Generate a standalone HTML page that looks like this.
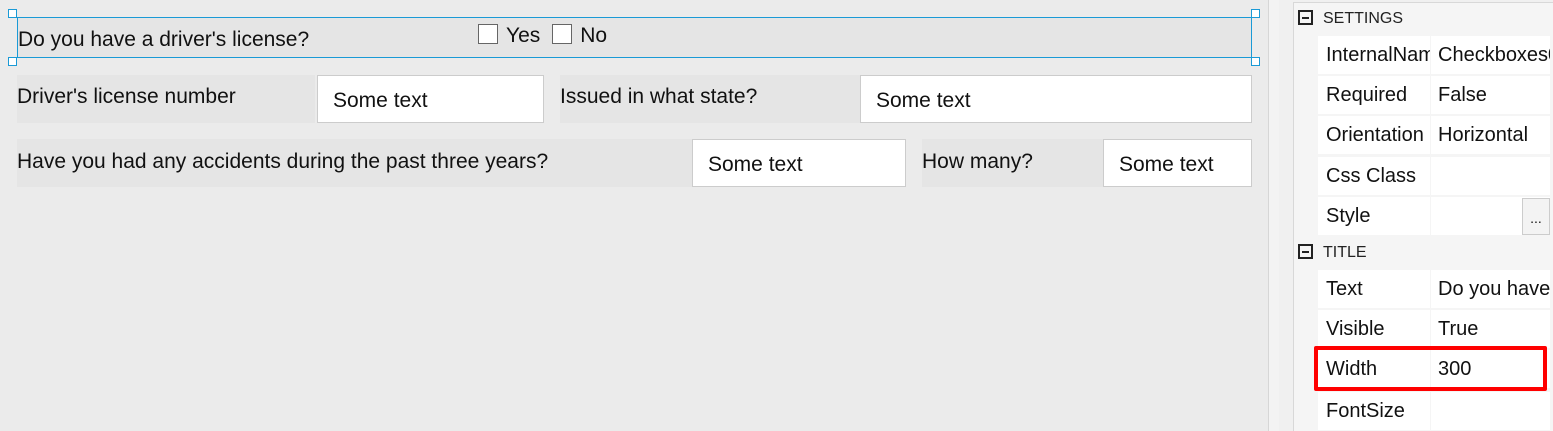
<!DOCTYPE html>
<html><head><style>
*{margin:0;padding:0;box-sizing:border-box}
body{width:1553px;height:431px;background:#ebebeb;font-family:"Liberation Sans","DejaVu Sans",sans-serif;color:#111;position:relative;overflow:hidden;font-size:21px}
.a{position:absolute}
.lb{position:absolute;background:#e5e5e5;white-space:nowrap;overflow:hidden}
.in{position:absolute;background:#fff;border:1px solid #ccc;white-space:nowrap;padding-left:15px;overflow:hidden}
.h{position:absolute;width:9px;height:9px;border:1px solid #1a9ad6;background:#fff}
.cb{display:inline-block;width:20px;height:20px;border:1px solid #666;background:#fff;vertical-align:-2px;margin-right:8px}
.pn{position:absolute;left:1318px;width:112px;height:38px;background:#fff;padding-left:8px;line-height:38px;font-size:20px;white-space:nowrap;overflow:hidden}
.pv{position:absolute;left:1431px;width:119px;height:38px;background:#fff;padding-left:7px;line-height:38px;font-size:20px;white-space:nowrap;overflow:hidden}
.sec{position:absolute;left:1298px;font-size:16px;color:#222}
.sec i{display:inline-block;width:15px;height:15px;border:2px solid #222;position:relative;vertical-align:-2px;margin-right:10px}
.sec i:after{content:"";position:absolute;left:2px;top:4.5px;width:7px;height:2px;background:#222}
</style></head><body>
<div class="lb" style="left:17px;top:17px;width:1235px;height:41px;border:1px solid #1a9ad6;line-height:44px;padding-left:0">Do you have a driver's license?</div>
<div class="a" style="left:478px;top:22px;line-height:28px;font-size:21px"><span class="cb"></span>Yes<span class="cb" style="margin-left:12px"></span>No</div>
<div class="h" style="left:8px;top:9px"></div>
<div class="h" style="left:8px;top:57px"></div>
<div class="h" style="left:1251px;top:9px"></div>
<div class="h" style="left:1251px;top:57px"></div>

<div class="lb" style="left:17px;top:75px;width:298px;height:48px;line-height:44px">Driver's license number</div>
<div class="in" style="left:317px;top:75px;width:227px;height:48px;line-height:50px">Some text</div>
<div class="lb" style="left:560px;top:75px;width:300px;height:48px;line-height:44px">Issued in what state?</div>
<div class="in" style="left:860px;top:75px;width:392px;height:48px;line-height:50px">Some text</div>

<div class="lb" style="left:17px;top:139px;width:675px;height:48px;line-height:46px">Have you had any accidents during the past three years?</div>
<div class="in" style="left:692px;top:139px;width:214px;height:48px;line-height:50px">Some text</div>
<div class="lb" style="left:922px;top:139px;width:181px;height:48px;line-height:46px">How many?</div>
<div class="in" style="left:1103px;top:139px;width:149px;height:48px;line-height:50px">Some text</div>

<div class="a" style="left:1268px;top:0;width:1px;height:431px;background:#d6d6d6"></div>
<div class="a" style="left:1269px;top:0;width:10px;height:431px;background:#f3f3f3"></div>
<div class="a" style="left:1279px;top:0;width:274px;height:431px;background:#f0f0f0"></div>
<div class="a" style="left:1293px;top:2px;width:260px;height:429px;background:#f5f5f5;border-left:1px solid #d8d8d8;border-top:1px solid #d8d8d8"></div>

<div class="sec" style="top:10px"><i></i>SETTINGS</div>
<div class="pn" style="top:36px">InternalName</div><div class="pv" style="top:36px">Checkboxes0</div>
<div class="pn" style="top:76px">Required</div><div class="pv" style="top:76px">False</div>
<div class="pn" style="top:116px">Orientation</div><div class="pv" style="top:116px">Horizontal</div>
<div class="pn" style="top:157px">Css Class</div><div class="pv" style="top:157px"></div>
<div class="pn" style="top:197px">Style</div><div class="pv" style="top:197px"></div>
<div class="a" style="left:1522px;top:198px;width:28px;height:37px;background:#f3f3f3;border:1px solid #ccc;text-align:center;line-height:38px;font-size:14px">...</div>
<div class="sec" style="top:244px"><i></i>TITLE</div>
<div class="pn" style="top:270px">Text</div><div class="pv" style="top:270px">Do you have a</div>
<div class="pn" style="top:310px">Visible</div><div class="pv" style="top:310px">True</div>
<div class="pn" style="top:350px">Width</div><div class="pv" style="top:350px">300</div>
<div class="pn" style="top:392px">FontSize</div><div class="pv" style="top:392px"></div>
<div class="a" style="left:1314px;top:346px;width:233px;height:45px;border:4px solid #f00;border-radius:2px"></div>
</body></html>
